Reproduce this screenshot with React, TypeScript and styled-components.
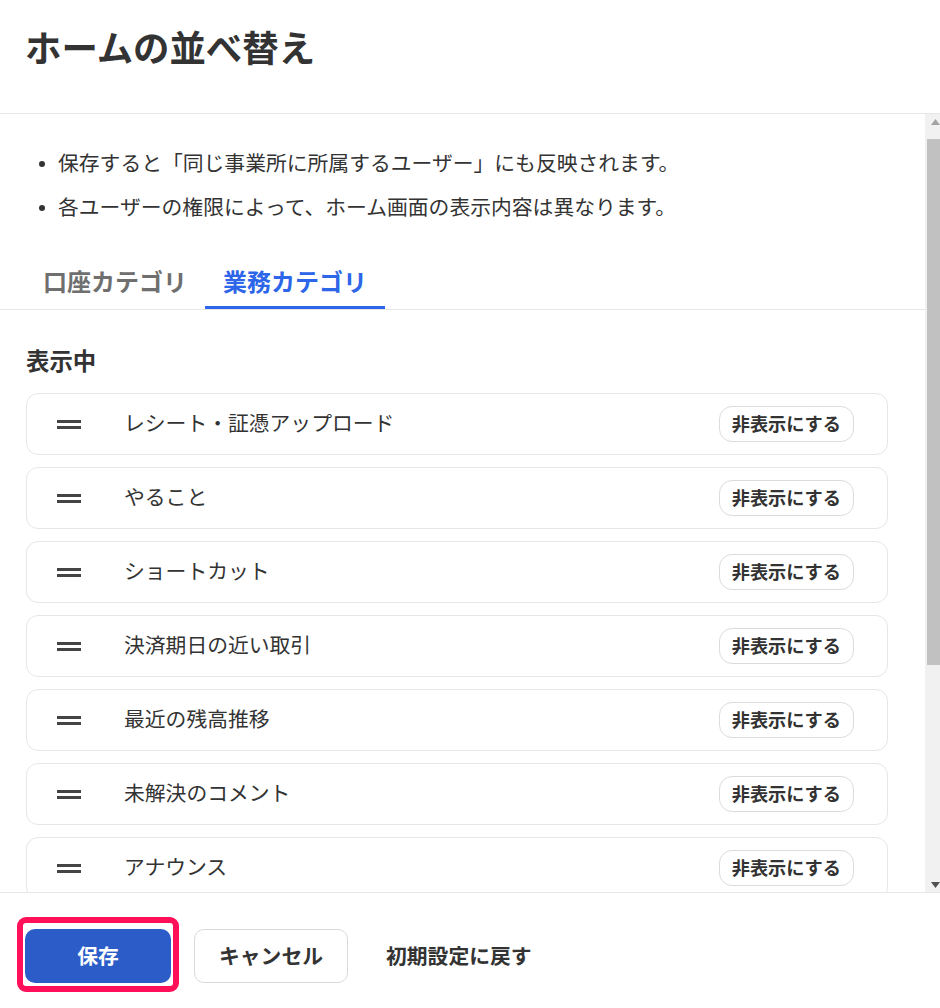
import React, { useEffect, useRef } from "react";
import styled, { createGlobalStyle } from "styled-components";

const Global = createGlobalStyle`
  html, body { margin: 0; padding: 0; background: #fff; }
  body {
    font-family: "Noto Sans CJK JP", "Noto Sans", sans-serif;
    color: #333;
  }
  * { box-sizing: border-box; }
`;

const Dialog = styled.div`
  height: 100vh;
  display: flex;
  flex-direction: column;
  background: #fff;
`;

const Header = styled.header`
  flex: none;
  height: 114px;
  padding: 19px 25px 0;
  border-bottom: 1px solid #e6e6e6;
`;

const Title = styled.h1`
  margin: 0;
  font-size: 36.4px;
  line-height: 54px;
  font-weight: 700;
  color: #333;
`;

const ScrollArea = styled.div`
  flex: 1;
  min-height: 0;
  display: flex;
`;

const Viewport = styled.div`
  flex: 1;
  min-width: 0;
  overflow-y: auto;
  padding: 48px 0 46px;
  scrollbar-width: none;
  &::-webkit-scrollbar { display: none; }
`;

const Scrollbar = styled.div`
  flex: none;
  width: 15px;
  display: flex;
  flex-direction: column;
  background: #f1f1f1;
`;

const ScrollArrow = styled.div<{ $dim?: boolean }>`
  flex: none;
  height: 15px;
  display: flex;
  justify-content: flex-end;
  align-items: center;
  svg { display: block; }
  color: ${(p) => (p.$dim ? "#a3a3a3" : "#505050")};
`;

const ScrollTrack = styled.div`
  flex: 1;
  display: flex;
  flex-direction: column;
  padding-left: 2px;
`;

const ScrollThumb = styled.div`
  background: #c1c1c1;
`;

const Notes = styled.ul`
  list-style: none;
  margin: 0;
  padding: 0 26px;
`;

const Note = styled.li`
  position: relative;
  padding-left: 32px;
  font-size: 20.8px;
  line-height: 31px;
  color: #333;
  & + & { margin-top: 13px; }
  &::before {
    content: "";
    position: absolute;
    left: 13px;
    top: 14px;
    width: 6px;
    height: 6px;
    border-radius: 50%;
    background: #333;
  }
`;

const TabBar = styled.div`
  display: flex;
  margin-top: 44px;
  padding-left: 25px;
  border-bottom: 1px solid #e6e6e6;
`;

const Tab = styled.button<{ $active?: boolean }>`
  background: none;
  border: none;
  border-bottom: 3px solid ${(p) => (p.$active ? "#2d66e8" : "transparent")};
  padding: 0 18px 10px;
  margin: 0;
  font-family: inherit;
  font-size: 24px;
  line-height: 30px;
  font-weight: 700;
  color: ${(p) => (p.$active ? "#2d66e8" : "#6f6f6f")};
  cursor: pointer;
`;

const Section = styled.section`
  padding: 0 37px 0 26px;
`;

const SectionTitle = styled.h2`
  margin: 33px 0 0;
  font-size: 23.4px;
  line-height: 35px;
  font-weight: 700;
  color: #333;
`;

const CardList = styled.div`
  display: flex;
  flex-direction: column;
  gap: 12px;
  margin-top: 15px;
`;

const Card = styled.div`
  height: 62px;
  display: flex;
  align-items: center;
  padding: 0 33px 0 30px;
  border: 1px solid #e6e6e6;
  border-radius: 12px;
  background: #fff;
`;

const Handle = styled.svg`
  flex: none;
  display: block;
  color: #444;
`;

const Label = styled.span`
  flex: 1;
  margin-left: 43px;
  padding-bottom: 3px;
  font-size: 20.8px;
  line-height: 31px;
  color: #333;
`;

const HideButton = styled.button`
  flex: none;
  height: 36px;
  padding: 0 12px 3px;
  border: 1px solid #dcdcdc;
  border-radius: 13px;
  background: #fff;
  font-family: inherit;
  font-size: 18.2px;
  font-weight: 700;
  color: #333;
  cursor: pointer;
`;

const EmptyText = styled.p`
  margin: 15px 0 0;
  font-size: 20.8px;
  line-height: 31px;
  color: #666;
`;

const Footer = styled.footer`
  flex: none;
  display: flex;
  align-items: center;
  gap: 23px;
  padding: 36px 26px 25px 25px;
  border-top: 1px solid #e6e6e6;
`;

const SaveWrap = styled.div`
  position: relative;
  display: flex;
`;

const Highlight = styled.span`
  position: absolute;
  top: -12px;
  left: -8px;
  right: -8px;
  bottom: -9px;
  border: 6px solid #ff1059;
  border-radius: 9px;
  pointer-events: none;
`;

const PrimaryButton = styled.button`
  width: 146px;
  height: 54px;
  padding: 0 0 2px;
  border: none;
  border-radius: 10px;
  background: #2b5cc8;
  color: #fff;
  font-family: inherit;
  font-size: 20.8px;
  font-weight: 700;
  cursor: pointer;
`;

const SecondaryButton = styled.button`
  width: 154px;
  height: 54px;
  padding: 0 0 2px;
  border: 1px solid #d9d9d9;
  border-radius: 10px;
  background: #fff;
  color: #333;
  font-family: inherit;
  font-size: 20.8px;
  font-weight: 700;
  cursor: pointer;
`;

const TextButton = styled.button`
  height: 54px;
  padding: 0 15px 2px;
  border: none;
  background: none;
  color: #333;
  font-family: inherit;
  font-size: 20.8px;
  font-weight: 700;
  cursor: pointer;
`;

const items = [
  "レシート・証憑アップロード",
  "やること",
  "ショートカット",
  "決済期日の近い取引",
  "最近の残高推移",
  "未解決のコメント",
  "アナウンス",
  "おすすめ機能",
  "お知らせ",
];

const DragIcon = () => (
  <Handle width="24" height="9" viewBox="0 0 24 9" aria-hidden="true">
    <rect x="0" y="0" width="24" height="3" fill="currentColor" />
    <rect x="0" y="6" width="24" height="3" fill="currentColor" />
  </Handle>
);

const TriangleUp = () => (
  <svg width="9" height="6" viewBox="0 0 9 6" aria-hidden="true">
    <polygon points="4.5,0 9,6 0,6" fill="currentColor" />
  </svg>
);

const TriangleDown = () => (
  <svg width="9" height="6" viewBox="0 0 9 6" aria-hidden="true">
    <polygon points="0,0 9,0 4.5,6" fill="currentColor" />
  </svg>
);

export default function App() {
  const bodyRef = useRef<HTMLDivElement>(null);
  useEffect(() => {
    if (bodyRef.current) bodyRef.current.scrollTop = 15;
  }, []);

  return (
    <>
      <Global />
      <Dialog>
        <Header>
          <Title>ホームの並べ替え</Title>
        </Header>
        <ScrollArea>
          <Viewport ref={bodyRef}>
            <Notes>
              <Note>保存すると「同じ事業所に所属するユーザー」にも反映されます。</Note>
              <Note>各ユーザーの権限によって、ホーム画面の表示内容は異なります。</Note>
            </Notes>
            <TabBar>
              <Tab>口座カテゴリ</Tab>
              <Tab $active>業務カテゴリ</Tab>
            </TabBar>
            <Section>
              <SectionTitle>表示中</SectionTitle>
              <CardList>
                {items.map((name) => (
                  <Card key={name}>
                    <DragIcon />
                    <Label>{name}</Label>
                    <HideButton>非表示にする</HideButton>
                  </Card>
                ))}
              </CardList>
              <SectionTitle>非表示</SectionTitle>
              <EmptyText>非表示の項目はありません。</EmptyText>
            </Section>
          </Viewport>
          <Scrollbar aria-hidden="true">
            <ScrollArrow $dim>
              <TriangleUp />
            </ScrollArrow>
            <ScrollTrack>
              <ScrollThumb style={{ marginTop: 10, height: 526 }} />
            </ScrollTrack>
            <ScrollArrow>
              <TriangleDown />
            </ScrollArrow>
          </Scrollbar>
        </ScrollArea>
        <Footer>
          <SaveWrap>
            <PrimaryButton>保存</PrimaryButton>
            <Highlight />
          </SaveWrap>
          <SecondaryButton>キャンセル</SecondaryButton>
          <TextButton>初期設定に戻す</TextButton>
        </Footer>
      </Dialog>
    </>
  );
}
